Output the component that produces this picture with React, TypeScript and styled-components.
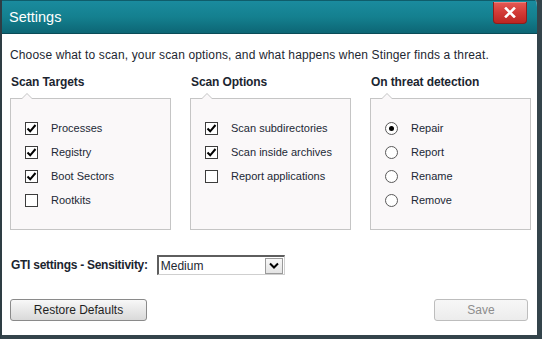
import styled, { createGlobalStyle } from "styled-components"

const GlobalStyle = createGlobalStyle`
  html, body {
    margin: 0;
    padding: 0;
    background: #33434a;
  }
  * {
    box-sizing: border-box;
  }
`

const Frame = styled.div`
  width: 542px;
  height: 339px;
  display: flex;
  flex-direction: column;
  background: #ffffff;
  border-left: 2px solid #2e3d44;
  border-right: 5px solid #34444b;
  border-bottom: 4px solid #34444b;
  border-top-right-radius: 7px;
  overflow: hidden;
  font-family: "Liberation Sans", Arial, sans-serif;
`

const TitleBar = styled.div`
  height: 34px;
  flex: none;
  display: flex;
  justify-content: space-between;
  align-items: center;
  padding-left: 7px;
  background: linear-gradient(#1a8b9e 0%, #14808f 50%, #0d6675 100%);
  border-top: 1px solid #0f5d6b;
  border-bottom: 1px solid #0a4b57;
`

const Title = styled.span`
  color: #ffffff;
  font-size: 14.5px;
  margin-top: -1px;
`

const CloseButton = styled.button`
  align-self: flex-start;
  width: 34px;
  height: 22px;
  margin: 1px 10px 0 0;
  padding: 0;
  display: flex;
  align-items: center;
  justify-content: center;
  background: linear-gradient(#e55a55 0%, #d23a36 50%, #bb2622 100%);
  border: 1px solid #8e1d1b;
  border-top: none;
  border-radius: 0 0 4px 4px;
  box-shadow: inset 0 1px 0 rgba(255, 255, 255, 0.25);
`

const Body = styled.div`
  flex: 1;
  display: flex;
  flex-direction: column;
  padding: 14px 9px 14px 8px;
  color: #1d2731;
`

const Intro = styled.p`
  margin: 0;
  font-size: 12px;
  line-height: 14px;
  letter-spacing: 0.14px;
`

const Columns = styled.div`
  display: grid;
  grid-template-columns: repeat(3, 161px);
  column-gap: 19px;
  margin-top: 13px;
`

const Column = styled.div`
  display: flex;
  flex-direction: column;
`

const Heading = styled.h3`
  margin: 0 0 0 1px;
  font-size: 12px;
  line-height: 14px;
  font-weight: bold;
  letter-spacing: -0.1px;
  color: #1b2530;
`

const Panel = styled.div`
  position: relative;
  height: 132px;
  margin-top: 9px;
  padding: 17px 0 17px 14px;
  background: #faf8f9;
  border: 1px solid #c5c5c5;
  display: flex;
  flex-direction: column;

  &::before,
  &::after {
    content: "";
    position: absolute;
    left: 10px;
    width: 0;
    height: 0;
    border-left: 6px solid transparent;
    border-right: 6px solid transparent;
  }
  &::before {
    top: -6px;
    border-bottom: 6px solid #c5c5c5;
  }
  &::after {
    top: -5px;
    left: 11px;
    border-left-width: 5px;
    border-right-width: 5px;
    border-bottom: 5px solid #faf8f9;
  }
`

const OptionRow = styled.label`
  height: 24px;
  display: flex;
  align-items: center;
  gap: 13px;
  font-size: 11px;
  color: #1c2836;
`

const Box = styled.span`
  width: 13px;
  height: 13px;
  flex: none;
  display: flex;
  align-items: center;
  justify-content: center;
  background: #ffffff;
  border: 1px solid #3c3c3c;
`

const Radio = styled.span<{ $on?: boolean }>`
  width: 13px;
  height: 13px;
  flex: none;
  border-radius: 50%;
  border: 1px solid #5a5a5a;
  background: radial-gradient(circle, #ffffff 60%, #eeeeee 100%);
  display: flex;
  align-items: center;
  justify-content: center;

  &::after {
    content: "";
    width: 5px;
    height: 5px;
    border-radius: 50%;
    background: ${(p) => (p.$on ? "#000000" : "transparent")};
  }
`

const GtiRow = styled.div`
  display: flex;
  align-items: center;
  gap: 9px;
  margin-top: 25px;
  margin-left: 1px;
`

const GtiLabel = styled.span`
  font-size: 12px;
  font-weight: bold;
  letter-spacing: -0.27px;
  color: #1b2530;
`

const Select = styled.div`
  width: 128px;
  height: 20px;
  display: flex;
  align-items: center;
  justify-content: space-between;
  background: #ffffff;
  border-top: 2px solid #5e5e5e;
  border-left: 2px solid #5e5e5e;
  border-right: 1px solid #cfcfcf;
  border-bottom: 1px solid #cfcfcf;
  padding: 0 1px 0 2px;
  font-size: 12px;
  color: #1d2731;
`

const SelectArrow = styled.span`
  width: 18px;
  height: 16px;
  display: flex;
  align-items: center;
  justify-content: center;
  background: linear-gradient(#f7f7f7, #e4e4e4);
  border: 1px solid #9a9a9a;
`

const Actions = styled.div`
  margin-top: auto;
  display: flex;
  justify-content: space-between;
`

const Button = styled.button<{ $width: number; $disabled?: boolean }>`
  width: ${(p) => p.$width}px;
  height: 22px;
  padding: 0;
  font-family: "Liberation Sans", Arial, sans-serif;
  font-size: 12px;
  border-radius: 3px;
  color: ${(p) => (p.$disabled ? "#8d8d8d" : "#1f1f1f")};
  border: 1px solid ${(p) => (p.$disabled ? "#bdbdbd" : "#8a8a8a")};
  background: ${(p) =>
    p.$disabled
      ? "linear-gradient(#f7f7f7, #ececec)"
      : "linear-gradient(#f8f8f8 0%, #e8e8e8 50%, #d9d9d9 100%)"};
`

const Check = () => (
  <svg width="11" height="11" viewBox="0 0 11 11">
    <path d="M1.5 5.5 L4.2 8.3 L9.5 2" fill="none" stroke="#000" strokeWidth="2" />
  </svg>
)

const targets = [
  { label: "Processes", on: true },
  { label: "Registry", on: true },
  { label: "Boot Sectors", on: true },
  { label: "Rootkits", on: false },
]

const options = [
  { label: "Scan subdirectories", on: true },
  { label: "Scan inside archives", on: true },
  { label: "Report applications", on: false },
]

const actions = ["Repair", "Report", "Rename", "Remove"]

export default function App() {
  return (
    <>
      <GlobalStyle />
      <Frame>
        <TitleBar>
          <Title>Settings</Title>
          <CloseButton aria-label="Close">
            <svg width="12" height="11" viewBox="0 0 12 11">
              <path d="M2 1.5 L10 9.5 M10 1.5 L2 9.5" stroke="#fff" strokeWidth="2.6" strokeLinecap="square" />
            </svg>
          </CloseButton>
        </TitleBar>
        <Body>
          <Intro>Choose what to scan, your scan options, and what happens when Stinger finds a threat.</Intro>
          <Columns>
            <Column>
              <Heading>Scan Targets</Heading>
              <Panel>
                {targets.map((t) => (
                  <OptionRow key={t.label}>
                    <Box>{t.on && <Check />}</Box>
                    {t.label}
                  </OptionRow>
                ))}
              </Panel>
            </Column>
            <Column>
              <Heading>Scan Options</Heading>
              <Panel>
                {options.map((o) => (
                  <OptionRow key={o.label}>
                    <Box>{o.on && <Check />}</Box>
                    {o.label}
                  </OptionRow>
                ))}
              </Panel>
            </Column>
            <Column>
              <Heading>On threat detection</Heading>
              <Panel>
                {actions.map((a, i) => (
                  <OptionRow key={a}>
                    <Radio $on={i === 0} />
                    {a}
                  </OptionRow>
                ))}
              </Panel>
            </Column>
          </Columns>
          <GtiRow>
            <GtiLabel>GTI settings - Sensitivity:</GtiLabel>
            <Select>
              Medium
              <SelectArrow>
                <svg width="10" height="7" viewBox="0 0 10 7">
                  <path d="M1 1.5 L5 5.5 L9 1.5" fill="none" stroke="#000" strokeWidth="2" />
                </svg>
              </SelectArrow>
            </Select>
          </GtiRow>
          <Actions>
            <Button $width={137}>Restore Defaults</Button>
            <Button $width={94} $disabled>
              Save
            </Button>
          </Actions>
        </Body>
      </Frame>
    </>
  )
}
